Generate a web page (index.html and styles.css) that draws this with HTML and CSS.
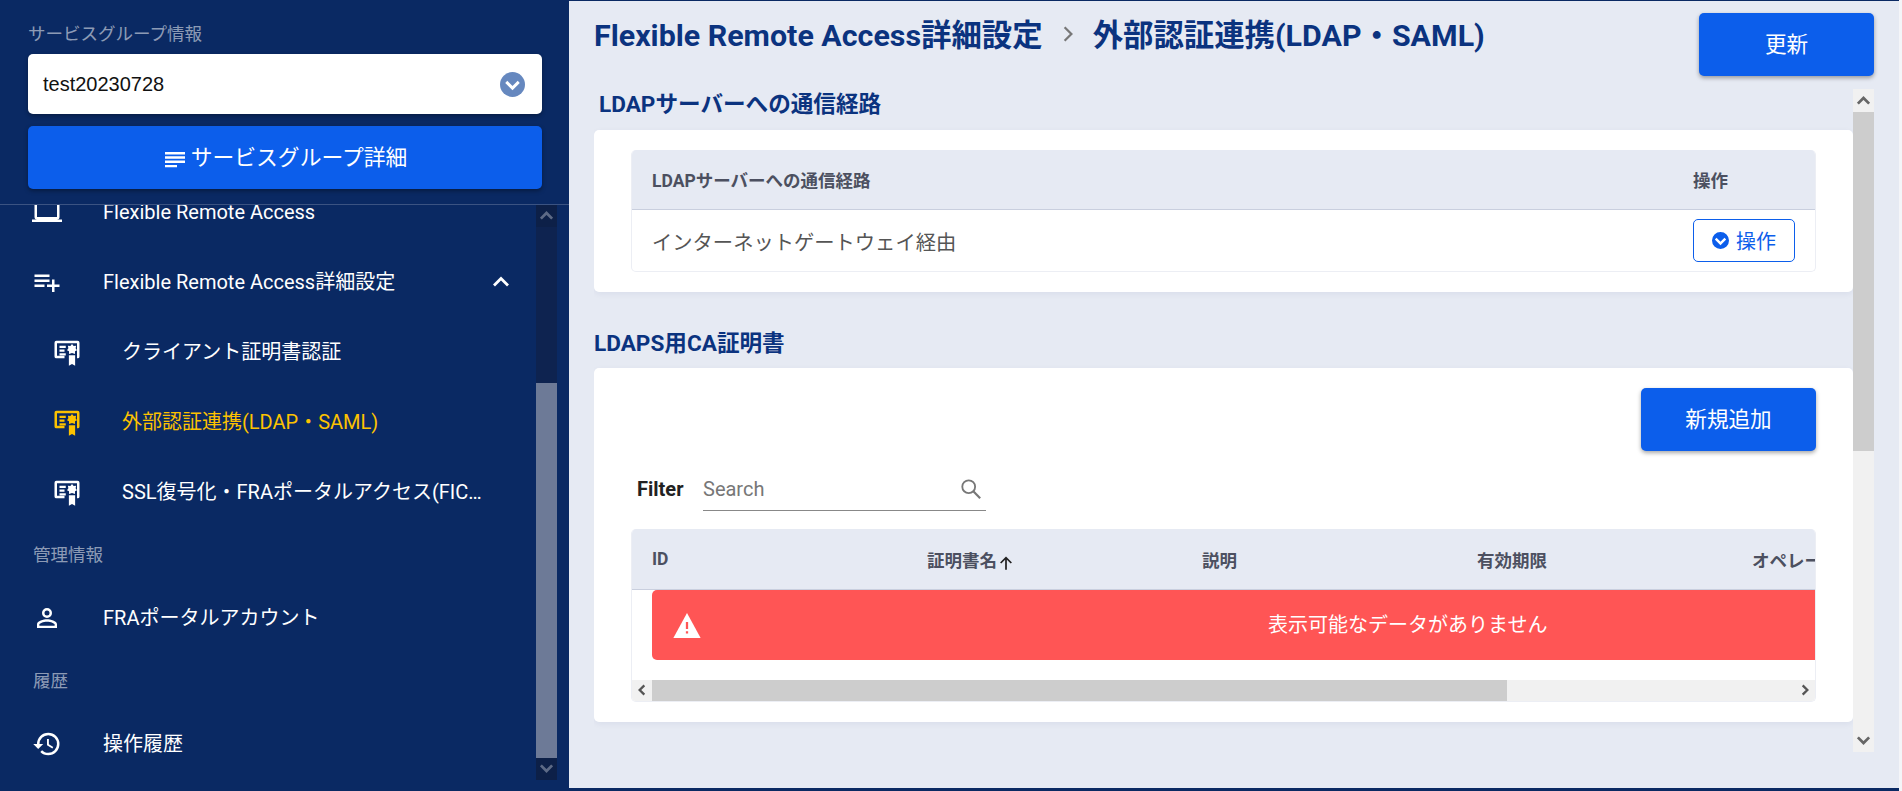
FILE: index.html
```html
<!DOCTYPE html>
<html lang="ja">
<head>
    <meta charset="UTF-8">
    <title>外部認証連携(LDAP・SAML)</title>
    <link rel="stylesheet" href="styles.css">
</head>
<body>
    <svg class="defs" width="0" height="0">
        <symbol id="i-cert" viewBox="0 0 24 24">
            <path d="M10 17H3.500A1.500 1.500 0 0 1 2 15.500V4.500A1.500 1.500 0 0 1 3.500 3H20.500A1.500 1.500 0 0 1 22 4.500V15.500A1.500 1.500 0 0 1 20.500 17H20V15H20V5H4V15H10Z" fill="currentColor"/>
            <path d="M6 7H11V8.700H6ZM6 10H10V11.700H6ZM6 13H11V14.700H6Z" fill="currentColor"/>
            <path d="M16 5.500L17.300 7.200L19.300 7L18.900 9L20 10.500L18.400 11.400V13.500L16 12.700L13.600 13.500V11.400L12 10.500L13.100 9L12.700 7L14.700 7.200Z" fill="currentColor"/>
            <path d="M13.500 14.500H18.500V23L16 21.500L13.500 23Z" fill="currentColor"/>
        </symbol>
        <symbol id="i-chev-circle" viewBox="0 0 24 24">
            <path d="M12 0A12 12 0 1 0 12 24A12 12 0 1 0 12 0ZM6.400 8.200L12 13.800L17.600 8.200L20 10.600L12 18.600L4 10.600Z" fill="currentColor"/>
        </symbol>
    </svg>

    <aside class="sidebar">
        <div class="side-head">
            <div class="side-label">サービスグループ情報</div>
            <div class="group-select">
                <span>test20230728</span>
                <svg class="select-icon" viewBox="0 0 24 24"><circle cx="12" cy="12" r="12" fill="#6688bf"/><path d="M6 9.500L12 15.500L18 9.500" fill="none" stroke="#fff" stroke-width="2.800"/></svg>
            </div>
            <button class="btn btn-detail">
                <svg class="detail-icon" viewBox="0 0 24 24"><path d="M2 5H22V7.400H2ZM2 9.300H22V11.700H2ZM2 13.600H22V16H2ZM2 17.900H14V20.300H2Z" fill="#fff"/></svg>
                サービスグループ詳細
            </button>
        </div>
        <div class="side-body">
            <nav class="nav-list">
                <a class="nav-item">
                    <svg class="nav-icon" viewBox="0 0 24 24"><path d="M4 6H20V16H4M20 18A2 2 0 0 0 22 16V6C22 4.890 21.100 4 20 4H4C2.890 4 2 4.890 2 6V16A2 2 0 0 0 4 18H0V20H24V18H20Z" fill="currentColor"/></svg>
                    <span class="nav-text">Flexible Remote Access</span>
                </a>
                <a class="nav-item">
                    <svg class="nav-icon" viewBox="0 0 24 24"><path d="M2 16H10V14H2M18 14V10H16V14H12V16H16V20H18V16H22V14M14 6H2V8H14M14 10H2V12H14V10Z" fill="currentColor"/></svg>
                    <span class="nav-text">Flexible Remote Access詳細設定</span>
                    <svg class="nav-chevron" viewBox="0 0 24 24"><path d="M5 15.500L12 8.500L19 15.500" fill="none" stroke="#fff" stroke-width="2.800"/></svg>
                </a>
                <a class="nav-item nav-sub">
                    <svg class="nav-icon"><use href="#i-cert"/></svg>
                    <span class="nav-text">クライアント証明書認証</span>
                </a>
                <a class="nav-item nav-sub active">
                    <svg class="nav-icon"><use href="#i-cert"/></svg>
                    <span class="nav-text">外部認証連携(LDAP・SAML)</span>
                </a>
                <a class="nav-item nav-sub">
                    <svg class="nav-icon"><use href="#i-cert"/></svg>
                    <span class="nav-text">SSL復号化・FRAポータルアクセス(FIC接続)設定</span>
                </a>
                <div class="nav-head">管理情報</div>
                <a class="nav-item">
                    <svg class="nav-icon" viewBox="0 0 24 24"><path d="M12 4A4 4 0 0 1 16 8A4 4 0 0 1 12 12A4 4 0 0 1 8 8A4 4 0 0 1 12 4M12 6A2 2 0 0 0 10 8A2 2 0 0 0 12 10A2 2 0 0 0 14 8A2 2 0 0 0 12 6M12 13C14.670 13 20 14.330 20 17V20H4V17C4 14.330 9.330 13 12 13M12 14.900C9.030 14.900 5.900 16.360 5.900 17V18.100H18.100V17C18.100 16.360 14.970 14.900 12 14.900Z" fill="currentColor"/></svg>
                    <span class="nav-text">FRAポータルアカウント</span>
                </a>
                <div class="nav-head">履歴</div>
                <a class="nav-item">
                    <svg class="nav-icon" viewBox="0 0 24 24"><path d="M13.500 8H12V13L16.280 15.540L17 14.330L13.500 12.250V8M13 3A9 9 0 0 0 4 12H1L4.960 16.030L9 12H6A7 7 0 0 1 13 5A7 7 0 0 1 20 12A7 7 0 0 1 13 19C11.070 19 9.320 18.210 8.060 16.940L6.640 18.360C8.270 20 10.500 21 13 21A9 9 0 0 0 22 12A9 9 0 0 0 13 3" fill="currentColor"/></svg>
                    <span class="nav-text">操作履歴</span>
                </a>
            </nav>
            <div class="nav-scroll">
                <div class="nav-scroll-btn"><svg viewBox="0 0 12 12"><path d="M1.500 8.500L6 4L10.500 8.500" fill="none" stroke="#5d6a86" stroke-width="2.200"/></svg></div>
                <div class="nav-scroll-track"></div>
                <div class="nav-scroll-thumb"></div>
                <div class="nav-scroll-btn"><svg viewBox="0 0 12 12"><path d="M1.500 3.500L6 8L10.500 3.500" fill="none" stroke="#5d6a86" stroke-width="2.200"/></svg></div>
            </div>
        </div>
    </aside>

    <main class="main">
        <header class="main-head">
            <h1 class="crumbs">
                <span>Flexible Remote Access詳細設定</span>
                <svg class="crumb-sep" viewBox="0 0 12 16"><path d="M3 2L9 8L3 14" fill="none" stroke="#777" stroke-width="2"/></svg>
                <span>外部認証連携(LDAP・SAML)</span>
            </h1>
            <button class="btn btn-main">更新</button>
        </header>

        <div class="main-body">
            <div class="content">
                <h2 class="section-title first">LDAPサーバーへの通信経路</h2>
                <section class="card card-route">
                    <div class="route-table">
                        <div class="route-row route-head">
                            <div class="route-name">LDAPサーバーへの通信経路</div>
                            <div class="route-op">操作</div>
                        </div>
                        <div class="route-row">
                            <div class="route-name route-value">インターネットゲートウェイ経由</div>
                            <div class="route-op">
                                <button class="btn-outline">
                                    <svg class="op-icon"><use href="#i-chev-circle"/></svg>
                                    操作
                                </button>
                            </div>
                        </div>
                    </div>
                </section>

                <h2 class="section-title">LDAPS用CA証明書</h2>
                <section class="card card-ca">
                    <div class="card-actions">
                        <button class="btn btn-main">新規追加</button>
                    </div>
                    <div class="filter">
                        <span class="filter-label">Filter</span>
                        <div class="filter-input">
                            <span>Search</span>
                            <svg class="search-icon" viewBox="0 0 24 24"><circle cx="9.500" cy="9.500" r="7" fill="none" stroke="#777" stroke-width="2"/><path d="M14.500 14.500L22 22" stroke="#777" stroke-width="2.400"/></svg>
                        </div>
                    </div>
                    <div class="ca-table">
                        <div class="ca-head">
                            <div class="ca-col">ID</div>
                            <div class="ca-col">証明書名<svg class="sort-icon" viewBox="0 0 12 12"><path d="M6 11V2M2 6L6 2L10 6" fill="none" stroke="#222" stroke-width="1.300"/></svg></div>
                            <div class="ca-col">説明</div>
                            <div class="ca-col">有効期限</div>
                            <div class="ca-col">オペレーション</div>
                        </div>
                        <div class="ca-alert">
                            <svg class="alert-icon" viewBox="0 0 24 22"><path d="M12 0L24 22H0Z" fill="#fff"/><path d="M11 8H13V14H11ZM11 16H13V18H11Z" fill="#ff5555"/></svg>
                            <span class="alert-text">表示可能なデータがありません</span>
                        </div>
                        <div class="h-scroll">
                            <div class="h-btn"><svg viewBox="0 0 12 12"><path d="M8 2L4 6L8 10" fill="none" stroke="#555" stroke-width="2"/></svg></div>
                            <div class="h-thumb"></div>
                            <div class="h-track"></div>
                            <div class="h-btn"><svg viewBox="0 0 12 12"><path d="M4 2L8 6L4 10" fill="none" stroke="#555" stroke-width="2"/></svg></div>
                        </div>
                    </div>
                </section>
            </div>
            <div class="v-scroll">
                <div class="v-btn"><svg viewBox="0 0 12 12"><path d="M1.500 8.500L6 4L10.500 8.500" fill="none" stroke="#666" stroke-width="2.200"/></svg></div>
                <div class="v-thumb"></div>
                <div class="v-track"></div>
                <div class="v-btn"><svg viewBox="0 0 12 12"><path d="M1.500 3.500L6 8L10.500 3.500" fill="none" stroke="#666" stroke-width="2.200"/></svg></div>
            </div>
        </div>
    </main>
</body>
</html>
```

FILE: styles.css
```css
* {
    box-sizing: border-box;
}

html, body {
    height: 100%;
}

body {
    margin: 0;
    display: flex;
    height: 791px;
    overflow: hidden;
    background-color: #f4f5f8;
    font-family: Roboto, "Noto Sans CJK JP", sans-serif;
    color: #333;
}

.defs {
    position: absolute;
}

button {
    font-family: inherit;
    border: none;
    cursor: pointer;
}

.btn {
    padding: 0 0 5px;
    background-color: #0c5eeb;
    color: #fff;
    border-radius: 5px;
    box-shadow: 0 2px 4px rgba(0, 0, 0, 0.35);
    font-size: 21.600px;
}

/* sidebar */
.sidebar {
    width: 569px;
    flex-shrink: 0;
    display: flex;
    flex-direction: column;
    background-color: #0a2963;
    color: #fff;
}

.side-head {
    height: 205px;
    padding: 20px 27px 0 28px;
    border-bottom: 1px solid rgba(255, 255, 255, 0.2);
}

.side-label {
    height: 28px;
    line-height: 28px;
    font-size: 17.500px;
    color: rgba(255, 255, 255, 0.55);
}

.group-select {
    margin-top: 6px;
    height: 60px;
    padding: 0 17px 0 15px;
    display: flex;
    align-items: center;
    justify-content: space-between;
    background-color: #fff;
    border-radius: 5px;
    box-shadow: 0 2px 4px rgba(0, 0, 0, 0.3);
    font-family: "Liberation Sans", sans-serif;
    font-size: 20px;
    color: #111;
}

.select-icon {
    width: 25px;
    height: 25px;
}

.btn-detail {
    width: 100%;
    height: 63px;
    margin-top: 12px;
    display: flex;
    align-items: center;
    justify-content: center;
    gap: 4px;
    font-size: 21.800px;
}

.detail-icon {
    width: 24px;
    height: 24px;
    margin-top: 8px;
}

.side-body {
    flex: 1;
    min-height: 0;
    display: flex;
    padding-right: 12px;
}

.nav-list {
    flex: 1;
    min-width: 0;
    overflow: hidden;
}

/* the list is scrolled down a little in this view */
.nav-item:first-child {
    margin-top: -28px;
}

.nav-item {
    height: 70px;
    padding: 0 23px 0 32px;
    display: flex;
    align-items: center;
    color: #fff;
    font-size: 20px;
    line-height: 30px;
}

.nav-icon {
    width: 30px;
    height: 30px;
    flex-shrink: 0;
    margin-right: 41px;
}

.nav-text {
    flex: 1;
    min-width: 0;
    height: 30px;
    white-space: nowrap;
    overflow: hidden;
    text-overflow: ellipsis;
}

.nav-chevron {
    width: 24px;
    height: 24px;
    flex-shrink: 0;
}

.nav-sub {
    padding-left: 52px;
    padding-right: 52px;
}

.nav-sub .nav-icon {
    margin-right: 40px;
}

.nav-sub.active {
    color: #fcc200;
}

.nav-head {
    height: 56px;
    padding-left: 33px;
    line-height: 56px;
    font-size: 17.500px;
    color: rgba(255, 255, 255, 0.55);
}

.nav-scroll {
    width: 21px;
    height: 575px;
    flex-shrink: 0;
    display: flex;
    flex-direction: column;
    background-color: #0e2350;
}

.nav-scroll-btn {
    height: 22px;
    padding: 3px;
    flex-shrink: 0;
    background-color: #0d2048;
}

.nav-scroll-btn svg {
    display: block;
}

.nav-scroll-track {
    height: 156px;
}

.nav-scroll-thumb {
    flex: 1;
    background-color: #6d7a97;
}

/* main area */
.main {
    flex: 1;
    min-width: 0;
    margin-right: 3px;
    display: flex;
    flex-direction: column;
    background-color: #e6eaf3;
    border-top: 1px solid #0a2963;
    border-bottom: 3px solid #0a2963;
}

.main-head {
    height: 88px;
    padding: 12px 25px 0;
    display: flex;
    justify-content: space-between;
    align-items: flex-start;
}

.crumbs {
    margin: -2px 0 0;
    height: 44px;
    display: flex;
    align-items: center;
    font-size: 30.400px;
    font-weight: 700;
    color: #0b337f;
    white-space: nowrap;
}

.crumb-sep {
    width: 14px;
    height: 18px;
    margin: 2px 18px 0;
}

.btn-main {
    width: 175px;
    height: 63px;
    flex-shrink: 0;
}

.main-body {
    height: 663px;
    padding: 0 25px;
    display: flex;
}

.content {
    flex: 1;
    min-width: 0;
    overflow: hidden;
}

.section-title {
    margin: 37px 0 9px;
    height: 30px;
    line-height: 30px;
    font-size: 22.600px;
    font-weight: 700;
    color: #0b337f;
}

.section-title.first {
    margin: 1px 0 10px 5px;
}

.card {
    background-color: #fff;
    border-radius: 5px;
    box-shadow: 0 2px 6px rgba(10, 40, 100, 0.06);
}

.card-route {
    padding: 20px 37px 20px 37px;
    height: 162px;
}

.route-table {
    border: 1px solid #eceef4;
    border-top: none;
    border-radius: 5px;
    overflow: hidden;
}

.route-row {
    height: 61px;
    display: flex;
    align-items: center;
}

.route-head {
    height: 60px;
    background-color: #e6eaf3;
    border-bottom: 1px solid #c9cfde;
    font-size: 17.500px;
    font-weight: 700;
    color: #4c5060;
}

.route-name {
    flex: 1;
    padding-left: 20px;
}

.route-value {
    font-size: 20.300px;
    color: #555;
}

.route-op {
    width: 122px;
    flex-shrink: 0;
}

.btn-outline {
    width: 102px;
    height: 43px;
    margin-top: -1px;
    display: flex;
    align-items: center;
    justify-content: center;
    gap: 7px;
    background-color: #fff;
    border: 1px solid #0c5eeb;
    border-radius: 5px;
    color: #0c5eeb;
    font-size: 20px;
}

.op-icon {
    width: 17px;
    height: 17px;
}

.card-ca {
    height: 354px;
    padding: 20px 37px 21px 37px;
}

.card-actions {
    display: flex;
    justify-content: flex-end;
}

.filter {
    height: 43px;
    margin: 17px 0 18px;
    padding-left: 6px;
    display: flex;
}

.filter-label {
    width: 66px;
    line-height: 42px;
    font-size: 20px;
    font-weight: 700;
    color: #222;
}

.filter-input {
    width: 283px;
    height: 43px;
    padding: 0 4px 0 0;
    display: flex;
    align-items: center;
    justify-content: space-between;
    border-bottom: 1px solid #888;
    font-size: 20px;
    color: #777;
}

.search-icon {
    width: 22px;
    height: 22px;
}

.ca-table {
    border-radius: 5px;
    overflow: hidden;
    border: 1px solid #eceef4;
    border-top: none;
}

.ca-head {
    height: 61px;
    padding-left: 20px;
    display: flex;
    align-items: center;
    background-color: #e6eaf3;
    border-bottom: 1px solid #c9cfde;
    font-size: 17.500px;
    font-weight: 700;
    color: #4c5060;
    white-space: nowrap;
}

.ca-col {
    width: 275px;
    flex-shrink: 0;
}

.sort-icon {
    width: 16px;
    height: 16px;
    margin-left: 1px;
    vertical-align: -4px;
}

.ca-alert {
    width: 1500px;
    height: 70px;
    margin-left: 20px;
    padding-left: 21px;
    display: flex;
    align-items: center;
    background-color: #ff5555;
    border-radius: 5px;
    color: #fff;
    font-size: 20px;
}

.alert-icon {
    width: 28px;
    height: 25px;
    flex-shrink: 0;
}

.alert-text {
    margin: -4px 0 0 567px;
}

.h-scroll {
    height: 21px;
    margin-top: 20px;
    display: flex;
    background-color: #f1f1f1;
}

.h-btn {
    width: 20px;
    padding: 3px;
    flex-shrink: 0;
}

.h-btn svg {
    display: block;
}

.h-thumb {
    width: 855px;
    background-color: #cdcdcd;
}

.h-track {
    flex: 1;
}

.v-scroll {
    width: 21px;
    flex-shrink: 0;
    display: flex;
    flex-direction: column;
    background-color: #f1f1f1;
}

.v-btn {
    height: 23px;
    padding: 4px 3px;
    flex-shrink: 0;
}

.v-btn svg {
    display: block;
}

.v-thumb {
    height: 339px;
    background-color: #cdcdcd;
}

.v-track {
    flex: 1;
}
```
